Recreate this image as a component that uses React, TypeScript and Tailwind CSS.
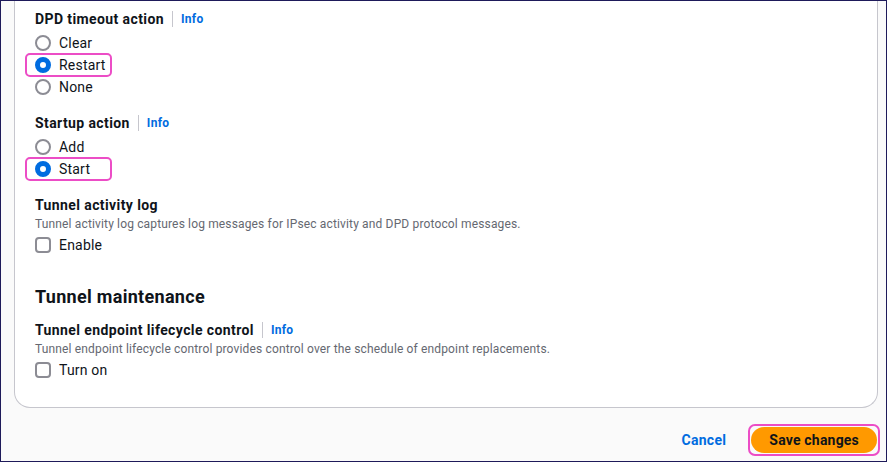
import type { ReactNode } from "react";

const FONT = { fontFamily: "Roboto, 'Noto Sans', sans-serif" };

function InfoLink() {
  return (
    <>
      <span className="mx-2 h-4 w-px bg-[#c6c6cd]" />
      <a className="text-[12px] font-bold tracking-[0.3px] text-[#006ce0]">Info</a>
    </>
  );
}

function FieldLabel({ children, info }: { children: ReactNode; info?: boolean }) {
  return (
    <div className="flex h-[22px] items-center text-[14px] font-bold text-[#0f141a]">
      <span className="tracking-[0.4px]">{children}</span>
      {info && <InfoLink />}
    </div>
  );
}

function Radio({ label, checked, highlight }: { label: string; checked?: boolean; highlight?: boolean }) {
  return (
    <div className="relative flex h-[22px] items-center gap-2 text-[14px] tracking-[0.2px] text-[#0f141a]">
      {checked ? (
        <span className="size-4 rounded-full border-[5px] border-[#006ce0] bg-white" />
      ) : (
        <span className="size-4 rounded-full border-2 border-[#8c8c94] bg-white" />
      )}
      <span>{label}</span>
      {highlight && (
        <span className="absolute top-[-1px] left-[-10px] h-[24px] w-[87px] rounded-[5px] border-2 border-[#ec4dc6]" />
      )}
    </div>
  );
}

function Checkbox({ label }: { label: string }) {
  return (
    <div className="flex h-[22px] items-center gap-2 text-[14px] tracking-[0.2px] text-[#0f141a]">
      <span className="size-4 rounded-[4px] border-2 border-[#8c8c94] bg-white" />
      <span>{label}</span>
    </div>
  );
}

function Description({ children }: { children: ReactNode }) {
  return <p className="h-4 text-[12px] leading-4 tracking-[0.15px] text-[#656871]">{children}</p>;
}

export default function App() {
  return (
    <div style={FONT} className="flex h-[462px] w-[887px] flex-col border border-[#1e1a5a] bg-[#fafafa]">
      <div className="ml-[13px] w-[864px] rounded-b-2xl border border-t-0 border-[#c6c6cd] bg-white pt-[7px] pb-[26px] pl-[20px]">
        <FieldLabel info>DPD timeout action</FieldLabel>
        <div className="mt-[2px]">
          <Radio label="Clear" />
          <Radio label="Restart" checked highlight />
          <Radio label="None" />
        </div>

        <div className="mt-[14px]">
          <FieldLabel info>Startup action</FieldLabel>
        </div>
        <div className="mt-[2px]">
          <Radio label="Add" />
          <Radio label="Start" checked highlight />
        </div>

        <div className="mt-[14px]">
          <FieldLabel>Tunnel activity log</FieldLabel>
          <Description>Tunnel activity log captures log messages for IPsec activity and DPD protocol messages.</Description>
          <div className="mt-[2px]">
            <Checkbox label="Enable" />
          </div>
        </div>

        <h2 className="mt-[29px] h-6 text-[18px] leading-6 font-bold tracking-[0.3px] text-[#0f141a]">
          Tunnel maintenance
        </h2>

        <div className="mt-[10px]">
          <FieldLabel info>Tunnel endpoint lifecycle control</FieldLabel>
          <Description>Tunnel endpoint lifecycle control provides control over the schedule of endpoint replacements.</Description>
          <div className="mt-[2px]">
            <Checkbox label="Turn on" />
          </div>
        </div>
      </div>

      <div className="mt-[16px] flex items-center justify-end pr-[6px]">
        <button type="button" className="mr-[22px] text-[14px] font-bold tracking-[0.3px] text-[#006ce0]">
          Cancel
        </button>
        <div className="rounded-[7px] border-2 border-[#ec4dc6] p-[1px]">
          <button
            type="button"
            className="h-[26px] rounded-full bg-[#ff9900] px-[18px] text-[14px] font-bold tracking-[0.2px] text-[#0f141a]"
          >
            Save changes
          </button>
        </div>
      </div>
    </div>
  );
}
